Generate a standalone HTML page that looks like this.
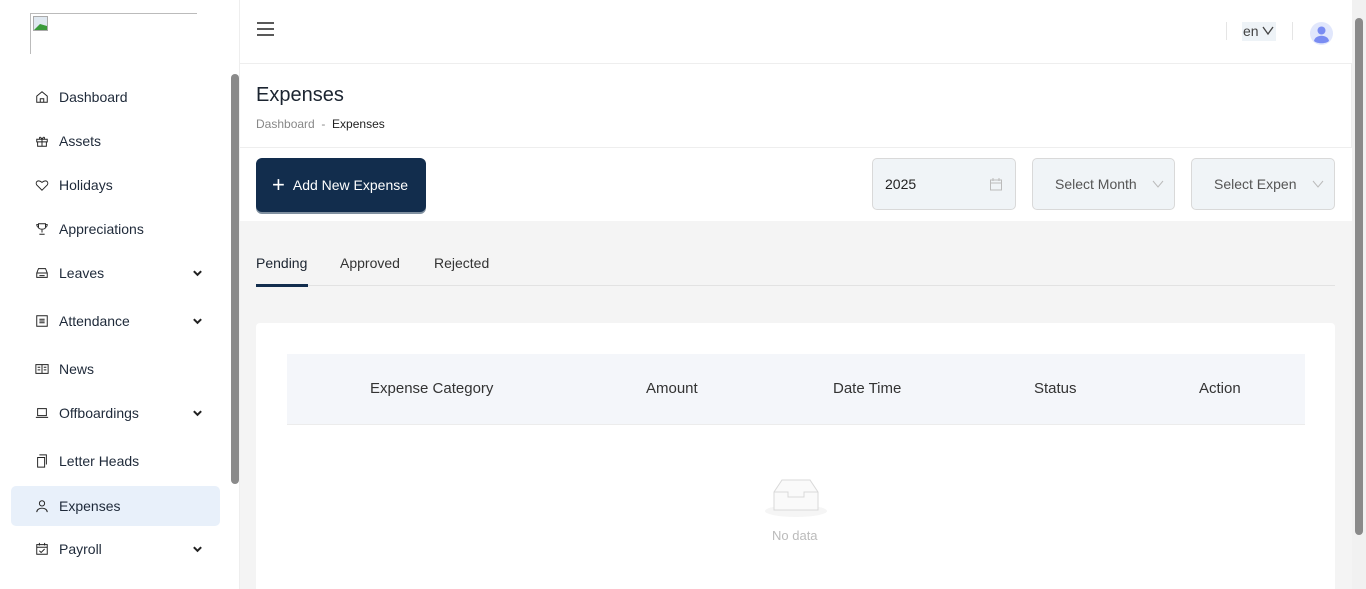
<!DOCTYPE html>
<html><head><style>
*{box-sizing:border-box;margin:0;padding:0}
html,body{width:1366px;height:589px;overflow:hidden}
body{font-family:"Liberation Sans",sans-serif;color:#1f2937;background:#f4f4f4;position:relative}
.sb{position:absolute;left:0;top:0;width:240px;height:589px;background:#fff;border-right:1px solid #eee}
.logo{position:absolute;left:30px;top:13px;width:167px;height:41px;border-top:1px solid #bbb;border-left:1px solid #bbb}
.it{position:absolute;left:11px;width:209px;height:40px;display:flex;align-items:center;padding-left:24px;font-size:14px;color:#1e2939}
.it svg{width:14px;height:14px;margin-right:10px;stroke:#222;fill:none;stroke-width:1.1}
.it .ch{position:absolute;right:17px;margin:0;width:11px;stroke-width:2.2}
.act{background:#e8f0fa;border-radius:5px}
.sbs{position:absolute;left:231px;top:74px;width:8px;height:410px;background:#8a8a8a;border-radius:4px}
.main{position:absolute;left:240px;top:0;width:1112px}
.hdr{height:64px;background:#fff;border-bottom:1px solid #eee;position:relative}
.ttl{height:84px;background:#fff;border:1px solid #eee;border-left:none;border-top:none;position:relative}
.flt{height:73px;background:#fff;position:relative}
.pgs{position:absolute;right:0;top:0;width:14px;height:589px;background:#f1f1f1}
.pgs div{position:absolute;left:3px;top:18px;width:8px;height:517px;background:#8a8a8a;border-radius:4px}
.sel{position:absolute;top:158px;height:52px;width:144px;border:1px solid #d9d9d9;border-radius:5px;background:#f0f4f7;font-size:14px;color:#555;display:flex;align-items:center}
</style></head><body>
<div class="sb">
<div class="logo"><svg width="16" height="16" style="position:absolute;left:2px;top:2px"><rect x="0.5" y="0.5" width="14" height="14" fill="#dfe8f0" stroke="#aaa"/><path d="M1 14 L7 8 L14 10 L14 14Z" fill="#3a9a3a"/></svg></div>
<div class="it" style="top:77px"><svg viewBox="0 0 16 16"><path d="M2 7 L8 2 L14 7 V14 H2Z M6 14 V10 H10 V14"/></svg>Dashboard</div>
<div class="it" style="top:121px"><svg viewBox="0 0 16 16"><path d="M2 6 H14 V9 H2Z M3 9 V14 H13 V9 M8 6 V14 M8 6 C6 2 4 4 6 6 M8 6 C10 2 12 4 10 6"/></svg>Assets</div>
<div class="it" style="top:165px"><svg viewBox="0 0 16 16"><path d="M8 14 L2 8 C0 5 3 1 8 5 C13 1 16 5 14 8Z"/></svg>Holidays</div>
<div class="it" style="top:209px"><svg viewBox="0 0 16 16"><path d="M4 2 H12 V6 C12 9 4 9 4 6Z M4 3 H2 C2 6 4 6 4 6 M12 3 H14 C14 6 12 6 12 6 M8 9 V12 M5 14 H11"/></svg>Appreciations</div>
<div class="it" style="top:253px"><svg viewBox="0 0 16 16"><path d="M2 8 L4 3 H12 L14 8 V13 H2Z M2 8 H14 M5 11 H11"/></svg>Leaves<svg class="ch" viewBox="0 0 12 12"><path d="M2 4 L6 8 L10 4"/></svg></div>
<div class="it" style="top:301px"><svg viewBox="0 0 16 16"><path d="M2 2 H14 V14 H2Z M5 6 H11 M5 8 H11 M5 10 H11"/></svg>Attendance<svg class="ch" viewBox="0 0 12 12"><path d="M2 4 L6 8 L10 4"/></svg></div>
<div class="it" style="top:349px"><svg viewBox="0 0 16 16"><path d="M1 3 H8 V13 H1Z M8 3 H15 V13 H8 M3 6 H6 M3 9 H6 M10 6 H13 M10 9 H13"/></svg>News</div>
<div class="it" style="top:393px"><svg viewBox="0 0 16 16"><path d="M3 3 H13 V11 H3Z M1 13 H15"/></svg>Offboardings<svg class="ch" viewBox="0 0 12 12"><path d="M2 4 L6 8 L10 4"/></svg></div>
<div class="it" style="top:441px"><svg viewBox="0 0 16 16"><path d="M5 1 H13 V12 M3 4 H11 V15 H3Z"/></svg>Letter Heads</div>
<div class="it act" style="top:486px"><svg viewBox="0 0 16 16"><circle cx="8" cy="5" r="3"/><path d="M2 15 C2 9 14 9 14 15"/></svg>Expenses</div>
<div class="it" style="top:529px"><svg viewBox="0 0 16 16"><path d="M2 3 H14 V14 H2Z M2 6 H14 M5 1 V4 M11 1 V4 M5 10 L7 12 L11 8"/></svg>Payroll<svg class="ch" viewBox="0 0 12 12"><path d="M2 4 L6 8 L10 4"/></svg></div>
<div class="sbs"></div>
</div>
<div class="main">
<div class="hdr">
<svg style="position:absolute;left:17px;top:21px" width="18" height="16"><path d="M0 2 H17 M0 8 H17 M0 14 H17" stroke="#222" stroke-width="1.6"/></svg>
<div style="position:absolute;left:986px;top:22px;width:1px;height:18px;background:#e5e5e5"></div>
<div style="position:absolute;left:1002px;top:22px;width:34px;height:19px;background:#eef3f7;font-size:14px;color:#444;padding-left:1px;padding-top:1px">en <svg width="12" height="10"><path d="M1 1 L6 8 L11 1" stroke="#444" fill="none" stroke-width="1.3"/></svg></div>
<div style="position:absolute;left:1052px;top:22px;width:1px;height:18px;background:#e5e5e5"></div>
<svg style="position:absolute;left:1070px;top:22px" width="23" height="23"><circle cx="11.5" cy="11.5" r="11.5" fill="#e1e7fc"/><circle cx="11.5" cy="8.5" r="4" fill="#7a8cf2"/><path d="M4 19 C5 12 18 12 19 19 C16 22 7 22 4 19Z" fill="#7a8cf2"/></svg>
</div>
<div class="ttl">
<div style="position:absolute;left:16px;top:20px;font-size:20px;color:#1b2430">Expenses</div>
<div style="position:absolute;left:16px;top:53px;font-size:12px;color:#888">Dashboard &nbsp;- &nbsp;<span style="color:#222">Expenses</span></div>
</div>
<div class="flt"></div>
</div>
<div style="position:absolute;left:256px;top:158px;width:170px;height:54px;background:#122d4d;border-radius:6px;box-shadow:0 2px 0 #8090a0;color:#fff;font-size:14px;display:flex;align-items:center;padding-left:16px"><span style="font-size:22px;font-weight:300;margin-right:8px;line-height:1">+</span>Add New Expense</div>
<div class="sel" style="left:872px;padding-left:12px;color:#222">2025<svg style="position:absolute;right:12px" width="14" height="14"><path d="M1.5 3 H12.5 V13 H1.5Z M1.5 6 H12.5 M4 1 V4 M10 1 V4" stroke="#bbb" fill="none"/></svg></div>
<div class="sel" style="left:1032px;width:143px;padding-left:22px">Select Month<svg style="position:absolute;right:10px" width="12" height="8"><path d="M1 1 L6 7 L11 1" stroke="#bbb" fill="none"/></svg></div>
<div class="sel" style="left:1191px;padding-left:22px;overflow:hidden;white-space:nowrap">Select Expens<div style="position:absolute;right:20px;top:1px;width:18px;height:48px;background:#f0f4f7"></div><svg style="position:absolute;right:10px" width="12" height="8"><path d="M1 1 L6 7 L11 1" stroke="#bbb" fill="none"/></svg></div>
<div style="position:absolute;left:256px;top:255px;font-size:14px;color:#1b2430">Pending</div>
<div style="position:absolute;left:340px;top:255px;font-size:14px;color:#333">Approved</div>
<div style="position:absolute;left:434px;top:255px;font-size:14px;color:#333">Rejected</div>
<div style="position:absolute;left:256px;top:285px;width:1079px;height:1px;background:#e2e2e2"></div>
<div style="position:absolute;left:256px;top:284px;width:52px;height:3px;background:#122d4d"></div>
<div style="position:absolute;left:256px;top:323px;width:1079px;height:266px;background:#fff;border-radius:4px 4px 0 0"></div>
<div style="position:absolute;left:287px;top:354px;width:1018px;height:71px;background:#f4f6fa;border-bottom:1px solid #ececec;font-size:15px;color:#333">
<span style="position:absolute;left:83px;top:26px">Expense Category</span>
<span style="position:absolute;left:359px;top:26px">Amount</span>
<span style="position:absolute;left:546px;top:26px">Date Time</span>
<span style="position:absolute;left:747px;top:26px">Status</span>
<span style="position:absolute;left:912px;top:26px">Action</span>
</div>
<svg style="position:absolute;left:764px;top:476px" width="64" height="42"><ellipse cx="32" cy="35" rx="31" ry="6" fill="#f5f5f5"/><path d="M10 16 L18 4 H46 L54 16 V34 H10Z" fill="#fafafa" stroke="#d9d9d9"/><path d="M10 16 H24 V21 H40 V16 H54" fill="none" stroke="#d9d9d9"/></svg>
<div style="position:absolute;left:772px;top:528px;font-size:13px;color:#bbb">No data</div>
<div class="pgs"><div></div></div>
</body></html>
